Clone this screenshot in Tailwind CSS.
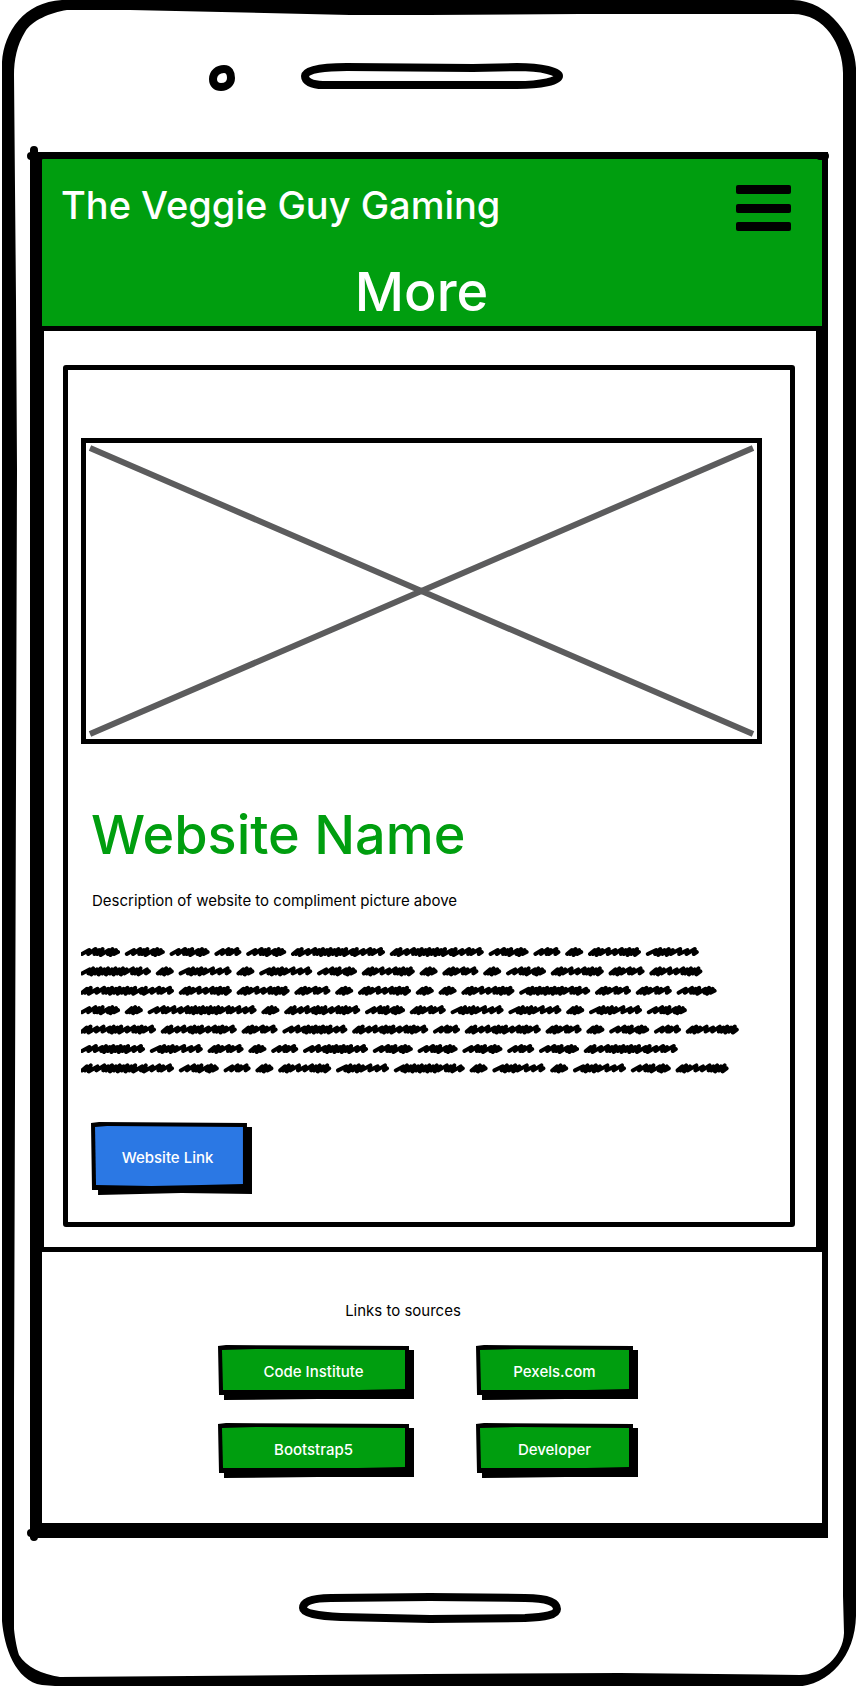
<!DOCTYPE html>
<html lang="en">
<head>
<meta charset="utf-8">
<meta name="viewport" content="width=device-width, initial-scale=1">
<title>The Veggie Guy Gaming – More</title>
<script src="https://cdn.jsdelivr.net/npm/@tailwindcss/browser@4"></script>
</head>
<body class="bg-white font-['Inter',sans-serif] text-black">
<div class="relative flex min-h-screen flex-col">

  <!-- Phone outline -->
  <svg class="pointer-events-none absolute inset-0 h-full w-full" viewBox="0 0 856 1686" preserveAspectRatio="none" aria-hidden="true">
    <path fill-rule="evenodd" d="M62 0H793C830 1 855 38 856 68V1615C855 1655 830 1684 795 1686H68L42 1684C15 1680 4 1645 2 1620V62C4 32 24 2 62 0ZM67 10C50 13 32 20 25 32C17 45 14 60 14 75L16 300L17 470L15 1090L14 1400V1628C15 1638 17 1648 19 1654C26 1666 42 1673 60 1676L428 1673L620 1672L800 1674C822 1674 843 1655 844 1632L843 1595V73C843 45 825 14 793 14H580L428 15H350L130 10Z"/>
    <path d="M34 150V160M31 156H40M31 1532H40M34 1530V1536M820 156H825" fill="none" stroke="#000" stroke-width="8" stroke-linecap="round"/>
  </svg>

  <div class="flex h-[152px] items-start justify-center gap-[66px] pt-[63px] pr-[84px]">
    <svg class="mt-[2px] h-[26px] w-[26px]" viewBox="0 0 26 26" fill="none" stroke="#000" stroke-width="8" aria-hidden="true">
      <path d="M15 4C20 4 22 8 22 13C22 18 18 22 12 22C7 22 4 19 4 14C4 8 9 4 15 4Z"/>
    </svg>
    <svg class="h-[26px] w-[262px]" viewBox="0 0 262 26" fill="none" stroke="#000" stroke-width="8" aria-hidden="true">
      <path d="M4 13C4 6 26 4 46 4L172 5L216 4C242 4 258 9 258 13C258 18 240 22 216 22H22C10 22 4 18 4 13Z"/>
    </svg>
  </div>

  <div class="mr-[28px] ml-[30px] flex flex-1 flex-col">
    <header class="border-t-[7px] border-r-[6px] border-b-[5px] border-l-[12px] border-black bg-[#009e0f] pt-[26px] pb-[4px] text-white">
      <div class="flex items-start justify-between pr-[31px] pl-[19px]">
        <a href="#" class="text-[38px] leading-[40px] font-medium">The Veggie Guy Gaming</a>
        <button type="button" aria-label="Menu" class="flex h-[46px] w-[55px] flex-col justify-between">
          <span class="h-[9px] w-full rounded-[2px] bg-black"></span>
          <span class="h-[9px] w-full rounded-[2px] bg-black"></span>
          <span class="h-[9px] w-full rounded-[2px] bg-black"></span>
        </button>
      </div>
      <h1 class="mt-[31px] pr-[21px] text-center text-[54px] leading-[60px] font-medium">More</h1>
    </header>

    <main class="flex-1 border-r-[12px] border-l-[14px] border-black pt-[34px] pr-[21px] pb-[20px] pl-[19px]">
      <article class="rounded-[3px] border-[5px] border-black pt-[68px] pr-[28px] pb-[27px] pl-[13px]">
        <div class="h-[306px] border-[5px] border-black">
          <svg class="h-full w-full" viewBox="0 0 671 296" preserveAspectRatio="none" role="img" aria-label="Website picture">
            <path d="M4 5L667 291M4 291L667 5" fill="none" stroke="#5c5c5d" stroke-width="6"/>
          </svg>
        </div>
        <h2 class="mt-[61px] pl-[10px] text-[54px] leading-[60px] font-medium text-[#009e0f]">Website Name</h2>
        <p class="mt-[24px] pl-[11px] text-[15px] leading-[24px]">Description of website to compliment picture above</p>
        <svg class="mt-[30px] h-auto w-full" viewBox="0 0 681 136" aria-hidden="true">
          <path id="scribble" fill="none" stroke="#000" stroke-width="4" stroke-linecap="round" stroke-linejoin="round"/>
        </svg>
        <a href="#" class="relative mt-[43px] ml-[10px] flex h-[73px] w-[161px] items-center justify-center pr-[8px] text-[15px] font-medium text-white">
          <svg class="absolute inset-0 h-full w-full" viewBox="0 0 160 73" preserveAspectRatio="none" aria-hidden="true">
            <path d="M0 1L8 0L155 1V5H160V72L90 71L7 73V68H1Z"/>
            <path fill="#2b78e4" d="M4 5L16 4L151 5V62L110 63L60 64L5 63Z"/>
          </svg>
          <span class="relative">Website Link</span>
        </a>
      </article>
    </main>

    <footer class="border-t-[5px] border-r-[6px] border-b-[15px] border-l-[12px] border-black pt-[47px] pb-[45px]">
      <p class="pr-[58px] text-center text-[15px] leading-[24px]">Links to sources</p>
      <nav aria-label="Sources" class="mt-[22px] grid grid-cols-[196px_162px] justify-center gap-x-[62px] gap-y-[23px] pr-[8px] text-[15px] font-medium text-white">
        <a href="#" class="relative flex h-[55px] items-center justify-center pr-[5px]">
          <svg class="absolute inset-0 h-full w-full" viewBox="0 0 196 55" preserveAspectRatio="none" aria-hidden="true">
            <path d="M0 1L8 0L191 1V5H196V54H100L6 55V50H1Z"/>
            <path fill="#009e0f" d="M4 5L40 4L187 5V44L140 45H5Z"/>
          </svg>
          <span class="relative">Code Institute</span>
        </a>
        <a href="#" class="relative flex h-[55px] items-center justify-center pr-[5px]">
          <svg class="absolute inset-0 h-full w-full" viewBox="0 0 162 55" preserveAspectRatio="none" aria-hidden="true">
            <path d="M0 1L8 0L157 1V5H162V54H90L6 55V50H1Z"/>
            <path fill="#009e0f" d="M4 5L40 4L153 5V44L110 45H5Z"/>
          </svg>
          <span class="relative">Pexels.com</span>
        </a>
        <a href="#" class="relative flex h-[55px] items-center justify-center pr-[5px]">
          <svg class="absolute inset-0 h-full w-full" viewBox="0 0 196 55" preserveAspectRatio="none" aria-hidden="true">
            <path d="M0 1L8 0L191 1V5H196V54H100L6 55V50H1Z"/>
            <path fill="#009e0f" d="M4 5L40 4L187 5V44L140 45H5Z"/>
          </svg>
          <span class="relative">Bootstrap5</span>
        </a>
        <a href="#" class="relative flex h-[55px] items-center justify-center pr-[5px]">
          <svg class="absolute inset-0 h-full w-full" viewBox="0 0 162 55" preserveAspectRatio="none" aria-hidden="true">
            <path d="M0 1L8 0L157 1V5H162V54H90L6 55V50H1Z"/>
            <path fill="#009e0f" d="M4 5L40 4L153 5V44L110 45H5Z"/>
          </svg>
          <span class="relative">Developer</span>
        </a>
      </nav>
    </footer>
  </div>

  <div class="flex h-[149px] items-start justify-center pt-[55px] pl-[4px]">
    <svg class="h-[30px] w-[262px]" viewBox="0 0 262 30" fill="none" stroke="#000" stroke-width="8" aria-hidden="true">
      <path d="M4 15C4 8 14 5 32 5L131 4L226 5C248 5 258 9 258 16C258 22 246 24 226 25L131 26L42 24C18 23 4 20 4 15Z"/>
    </svg>
  </div>
</div>

<script>
  // Scribbled filler words: width and pen strokes (o = open stroke, d = dense stroke)
  const words = {
    A: [39, 'ooddodd'], B: [26, 'oodo'], C: [93, 'ddooddddddddodoodo'], D: [17, 'ddd'],
    E: [52, 'dddooodddd'], F: [52, 'oddddooo'], G: [70, 'oddddddddddoddo'], H: [35, 'dddodo'],
    I: [75, 'ddooodddoodddo'], J: [108, 'oodooodddddddddodooo'], K: [64, 'ooodddddddoo']
  };
  const lines = ['AAABACCABDEF', 'GDFDFAEDHDAEHE', 'CEEHDEDDEGHHA', 'ADJDIAHFFDFA',
                 'IIHKIBIHDABE', 'KFHDBKAAABAC', 'CABDEFGDFDFAE'];
  const stepOf = s => (s === 'o' ? 7 : 4);
  let d = '';
  lines.forEach((line, row) => {
    let x = -1;
    const y = 9 + row * 19.4;
    for (const key of line) {
      const [width, strokes] = words[key];
      const total = [...strokes].reduce((sum, s) => sum + stepOf(s), 0);
      const scale = (width - 6) / total;
      let px = x + 2;
      d += `M${px.toFixed(1)} ${(y + 2).toFixed(1)}`;
      [...strokes].forEach((s, i) => {
        px += stepOf(s) * scale;
        const top = y - 2 - (i % 2);
        const bottom = y + 2 + (s === 'd' && i % 2 ? 1 : 0);
        d += `L${(px + 1).toFixed(1)} ${top.toFixed(1)}L${(px - (s === 'o' ? 0 : 1)).toFixed(1)} ${bottom.toFixed(1)}`;
      });
      d += `L${(x + width - 1).toFixed(1)} ${y.toFixed(1)}`;
      x += width + 5.8;
    }
  });
  document.getElementById('scribble').setAttribute('d', d);
</script>
</body>
</html>
